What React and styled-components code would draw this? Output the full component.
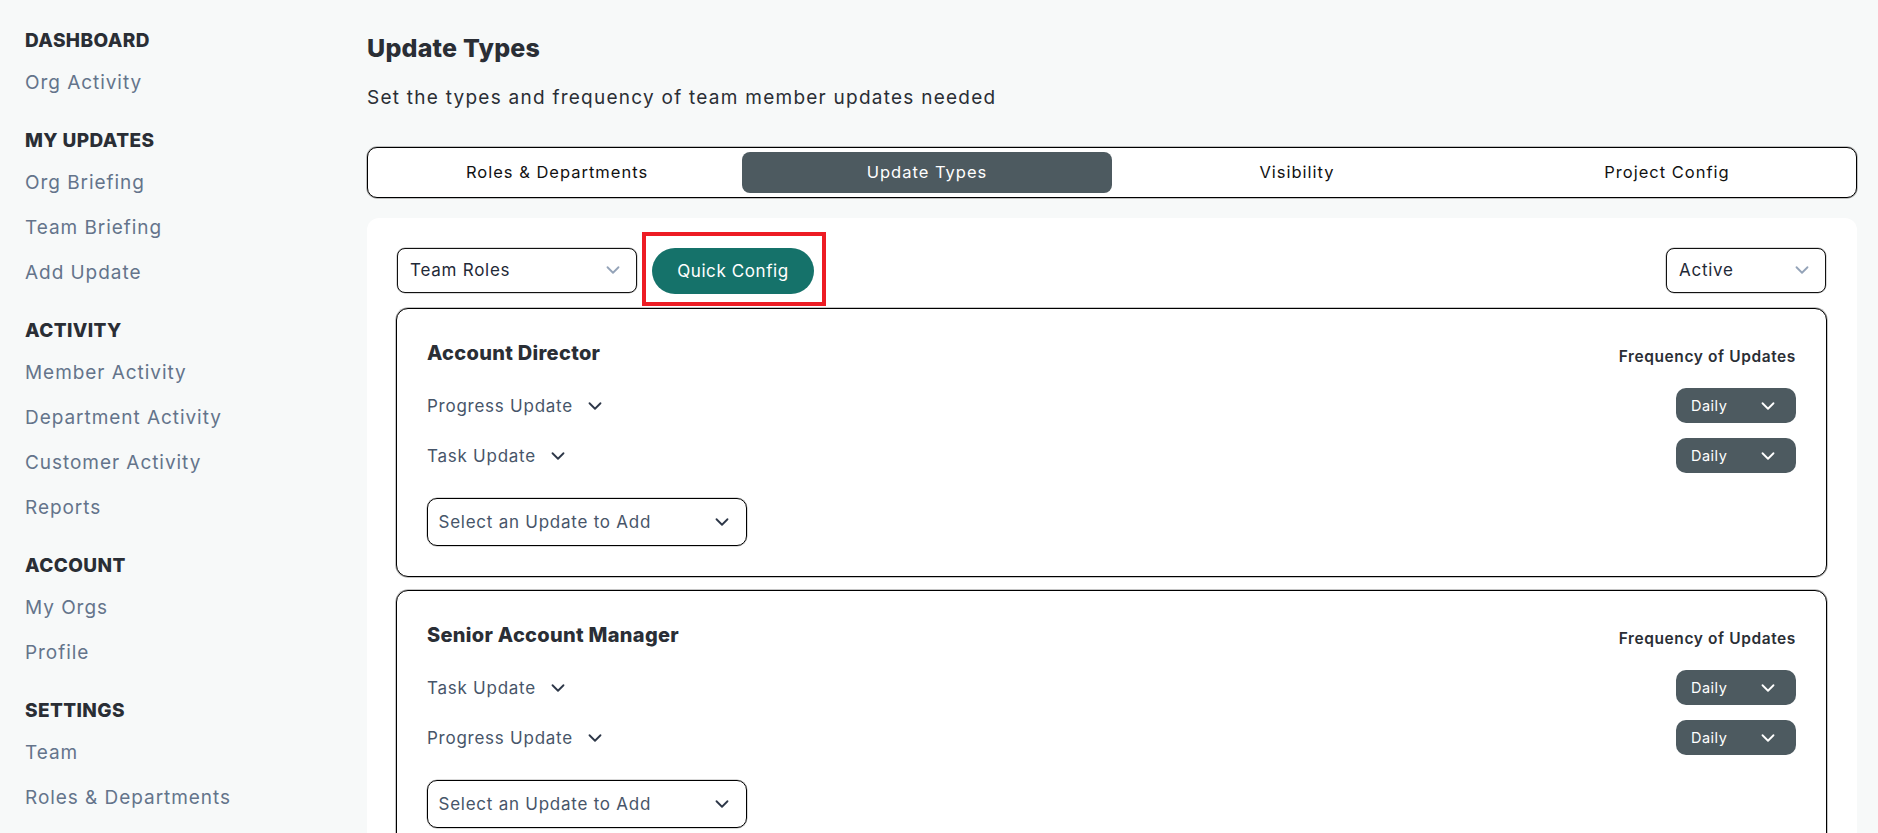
import React from 'react';
import styled, { createGlobalStyle } from 'styled-components';
import { ChevronDown } from 'lucide-react';

const GlobalStyle = createGlobalStyle`
  html, body {
    margin: 0;
    height: 100%;
    overflow: hidden;
    background: #f7f9f9;
    font-family: 'Inter', 'Liberation Sans', sans-serif;
  }
  * { box-sizing: border-box; }
`;

const Page = styled.div`
  display: flex;
  height: 833px;
  overflow: hidden;
  background: #f7f9f9;
`;

const Sidebar = styled.nav`
  flex: 0 0 367px;
  padding: 27px 0 0 25px;
  display: flex;
  flex-direction: column;
  gap: 21.5px;
`;

const NavSection = styled.div`
  display: flex;
  flex-direction: column;
`;

const NavHeading = styled.div`
  font-size: 19px;
  line-height: 27px;
  font-weight: 800;
  letter-spacing: 0.4px;
  color: #2a2e35;
  margin-bottom: 6.5px;
`;

const NavItem = styled.a`
  font-size: 19px;
  line-height: 44px;
  height: 45px;
  letter-spacing: 0.95px;
  color: #64748b;
`;

const Main = styled.main`
  flex: 1;
  padding: 33px 21px 0 0;
  min-width: 0;
`;

const Title = styled.h1`
  margin: 0;
  font-size: 25px;
  line-height: 30px;
  font-weight: 800;
  letter-spacing: 0.2px;
  color: #2a2e35;
`;

const Subtitle = styled.p`
  margin: 22px 0 0;
  font-size: 19px;
  line-height: 26px;
  letter-spacing: 1.25px;
  color: #2a2e35;
`;

const Tabs = styled.div`
  margin-top: 36px;
  height: 51px;
  border: 1px solid #000;
  box-shadow: 0 0 0 0.75px rgba(0, 0, 0, 0.3);
  border-radius: 10px;
  background: #fff;
  padding: 4px;
  display: grid;
  grid-template-columns: repeat(4, 370px);
`;

const Tab = styled.div`
  display: flex;
  align-items: center;
  justify-content: center;
  padding-bottom: 2px;
  border-radius: 8px;
  font-size: 16.5px;
  letter-spacing: 1px;
  color: ${p => (p.$active ? '#fff' : '#111')};
  background: ${p => (p.$active ? '#4d5a60' : 'transparent')};
`;

const Panel = styled.section`
  margin-top: 20px;
  background: #fff;
  border-radius: 12px 12px 0 0;
  padding: 30px 30px 0 29px;
  display: flex;
  flex-direction: column;
  gap: 13px;
`;

const Toolbar = styled.div`
  display: flex;
  align-items: flex-start;
  gap: 15px;
  height: 47px;
`;

const FilterSelect = styled.div`
  width: ${p => p.$width}px;
  height: 45px;
  margin-left: ${p => (p.$push ? 'auto' : '1px')};
  margin-right: ${p => (p.$push ? '1px' : '0')};
  padding: 0 12px 1px;
  display: flex;
  align-items: center;
  justify-content: space-between;
  background: #fff;
  border: 1px solid #111;
  box-shadow: 0 0 0 0.5px rgba(0, 0, 0, 0.3);
  border-radius: 8px;
  font-size: 17px;
  letter-spacing: 0.75px;
  color: #1f2937;
`;

const QuickButtonWrap = styled.div`
  position: relative;
`;

const QuickButton = styled.button`
  width: 162px;
  height: 46px;
  border: 0;
  border-radius: 23px;
  background: #15726a;
  color: #fff;
  font: inherit;
  font-size: 17px;
  letter-spacing: 0.6px;
`;

const Highlight = styled.div`
  position: absolute;
  left: -10px;
  top: -16px;
  width: 184px;
  height: 74px;
  border: 4px solid #ed1c24;
  pointer-events: none;
`;

const Card = styled.article`
  border: 1px solid #000;
  box-shadow: 0 0 0 0.75px rgba(0, 0, 0, 0.3);
  border-radius: 12px;
  padding: 29px 30px 30px;
  background: #fff;
  display: flex;
  flex-direction: column;
`;

const CardHeader = styled.header`
  display: flex;
  justify-content: space-between;
  height: 50px;
`;

const RoleName = styled.h2`
  margin: 0;
  font-size: 20px;
  line-height: 31px;
  font-weight: 800;
  letter-spacing: 0.3px;
  color: #2a2e35;
`;

const FrequencyLabel = styled.span`
  font-size: 15.5px;
  line-height: 38px;
  font-weight: 600;
  letter-spacing: 0.6px;
  color: #2a2e35;
`;

const UpdateRow = styled.div`
  height: 50px;
  display: flex;
  justify-content: space-between;
`;

const UpdateName = styled.div`
  height: 35px;
  display: flex;
  align-items: center;
  gap: 11px;
  font-size: 17px;
  letter-spacing: 0.75px;
  color: #475569;
  svg { color: #2d3748; }
`;

const FrequencyPill = styled.div`
  width: 120px;
  height: 35px;
  padding: 0 17px 0 15px;
  border-radius: 10px;
  background: #4d5a60;
  color: #fff;
  font-size: 14.5px;
  letter-spacing: 0.5px;
  display: flex;
  align-items: center;
  justify-content: space-between;
`;

const AddSelect = styled.div`
  width: 320px;
  height: 48px;
  margin-top: 10px;
  padding: 0 13px 0 10.5px;
  border: 1px solid #000;
  box-shadow: 0 0 0 0.5px rgba(0, 0, 0, 0.3);
  border-radius: 10px;
  display: flex;
  align-items: center;
  justify-content: space-between;
  font-size: 17px;
  letter-spacing: 0.75px;
  color: #475569;
  svg { color: #2d3748; }
`;

const Muted = styled.span`
  display: flex;
  color: #94a3b8;
`;

const nav = [
  { title: 'DASHBOARD', items: ['Org Activity'] },
  { title: 'MY UPDATES', items: ['Org Briefing', 'Team Briefing', 'Add Update'] },
  { title: 'ACTIVITY', items: ['Member Activity', 'Department Activity', 'Customer Activity', 'Reports'] },
  { title: 'ACCOUNT', items: ['My Orgs', 'Profile'] },
  { title: 'SETTINGS', items: ['Team', 'Roles & Departments'] },
];

const tabs = ['Roles & Departments', 'Update Types', 'Visibility', 'Project Config'];

const roles = [
  { name: 'Account Director', updates: ['Progress Update', 'Task Update'] },
  { name: 'Senior Account Manager', updates: ['Task Update', 'Progress Update'] },
];

const Chevron = () => <ChevronDown size={22} strokeWidth={2} />;

const App = () => (
  <Page>
    <GlobalStyle />
    <Sidebar>
      {nav.map(section => (
        <NavSection key={section.title}>
          <NavHeading>{section.title}</NavHeading>
          {section.items.map(item => (
            <NavItem key={item}>{item}</NavItem>
          ))}
        </NavSection>
      ))}
    </Sidebar>
    <Main>
      <Title>Update Types</Title>
      <Subtitle>Set the types and frequency of team member updates needed</Subtitle>
      <Tabs>
        {tabs.map(tab => (
          <Tab key={tab} $active={tab === 'Update Types'}>{tab}</Tab>
        ))}
      </Tabs>
      <Panel>
        <Toolbar>
          <FilterSelect $width={240}>
            Team Roles
            <Muted><Chevron /></Muted>
          </FilterSelect>
          <QuickButtonWrap>
            <QuickButton>Quick Config</QuickButton>
            <Highlight />
          </QuickButtonWrap>
          <FilterSelect $width={160} $push>
            Active
            <Muted><Chevron /></Muted>
          </FilterSelect>
        </Toolbar>
        {roles.map(role => (
          <Card key={role.name}>
            <CardHeader>
              <RoleName>{role.name}</RoleName>
              <FrequencyLabel>Frequency of Updates</FrequencyLabel>
            </CardHeader>
            {role.updates.map(update => (
              <UpdateRow key={update}>
                <UpdateName>{update}<Chevron /></UpdateName>
                <FrequencyPill>Daily<Chevron /></FrequencyPill>
              </UpdateRow>
            ))}
            <AddSelect>Select an Update to Add<Chevron /></AddSelect>
          </Card>
        ))}
      </Panel>
    </Main>
  </Page>
);

export default App;
